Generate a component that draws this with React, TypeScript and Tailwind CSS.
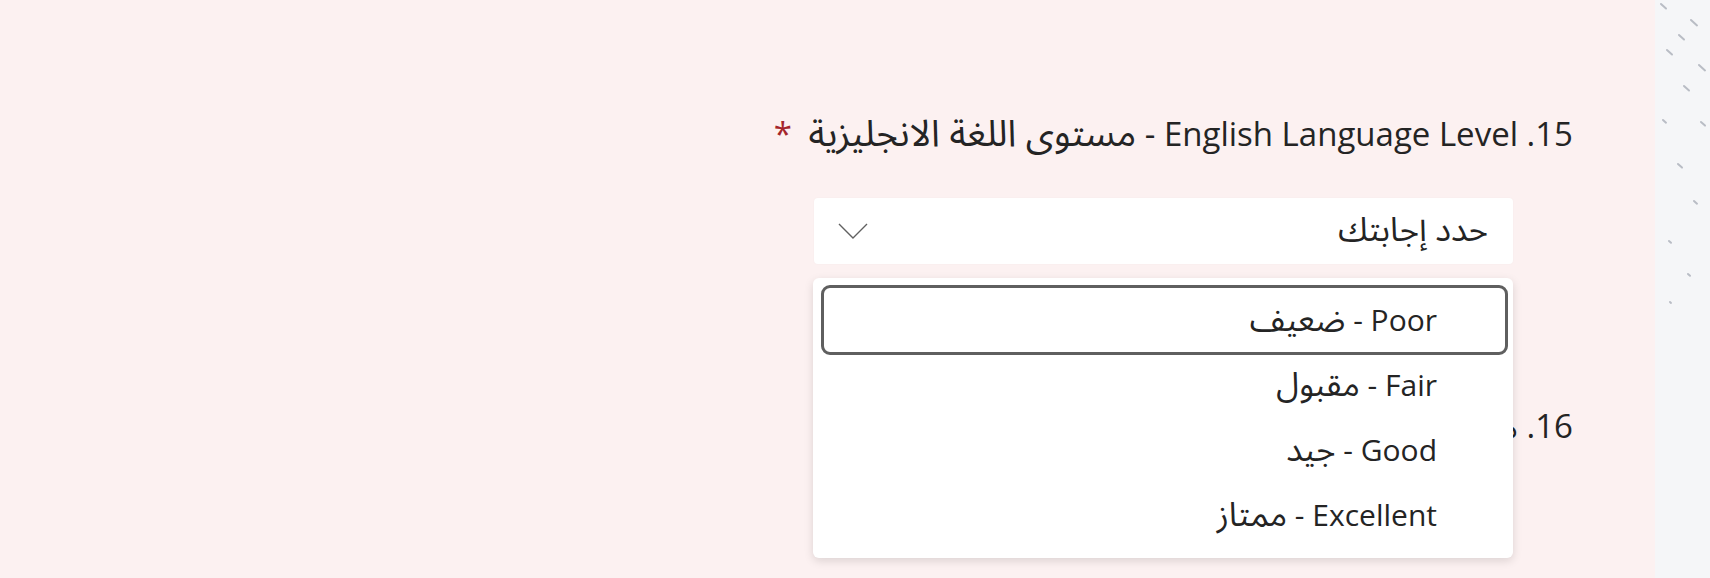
import * as React from "react"

const OPTIONS = [
  ["Poor", "ضعيف"],
  ["Fair", "مقبول"],
  ["Good", "جيد"],
  ["Excellent", "ممتاز"],
]

// little grey dashes on the right edge strip
const DASHES: [number, number, number][] = [
  [6, 4, 5], [36, 20, 6], [24, 35, 5], [12, 50, 5], [44, 65, 6],
  [29, 86, 5], [8, 120, 3], [46, 122, 4], [23, 164, 4], [39, 201, 3],
  [14, 241, 2], [33, 274, 2], [15, 302, 1],
]

const ar = '"Noto Sans Arabic", "DejaVu Sans", sans-serif'

function Chevron() {
  return (
    <svg width="30" height="17" viewBox="0 0 30 17" fill="none">
      <polyline points="1,1 15,15 29,1" stroke="#616161" strokeWidth="1.4" />
    </svg>
  )
}

export default function App() {
  return (
    <div
      className="flex h-[578px] w-full overflow-hidden bg-[#fcf1f1] text-[#242424]"
      style={{ fontFamily: '"Open Sans", "DejaVu Sans", sans-serif' }}
    >
      <main className="relative flex-1" dir="rtl">
        <div className="pr-[82px] pt-[112px]">
          <h2 className="text-[33px] leading-[44px]">
            15. English Language Level -{" "}
            <span className="text-[37px]" style={{ fontFamily: ar }}>مستوى اللغة الانجليزية</span>{" "}
            <span className="mr-[8px] text-[#a4262c]">*</span>
          </h2>
          <div className="mt-[42px] mr-[60px] flex h-[66px] w-[699px] items-center justify-between rounded-[4px] bg-white pr-[25px] pl-[24px] shadow-[0_0_2px_rgba(0,0,0,0.04)]">
            <span className="text-[33px] leading-[40px]" style={{ fontFamily: ar }}>
              حدد إجابتك
            </span>
            <Chevron />
          </div>
          <h2 className="mt-[140px] text-[33px] leading-[44px]">
            16. <span style={{ fontFamily: ar }}>ما</span>
          </h2>
        </div>

        {/* open listbox */}
        <div className="absolute left-[813px] top-[278px] w-[700px] rounded-[6px] bg-white pt-[10px] pb-[10px] pr-[5px] pl-[8px] shadow-[0_3px_10px_rgba(0,0,0,0.13)]">
          {OPTIONS.map(([en, arText], i) => (
            <div key={en} className="relative flex h-[65px] items-center pr-[71px]">
              {i === 0 && (
                <span className="absolute -top-[3px] -bottom-[2px] left-0 right-0 rounded-[9px] border-[3px] border-[#5f5f5f]" />
              )}
              <span className="text-[30px] leading-[40px]">
                {en} - <span className="text-[33px]" style={{ fontFamily: ar }}>{arText}</span>
              </span>
            </div>
          ))}
        </div>
      </main>

      <aside className="relative w-[55px] bg-[#f5f6f8]">
        <svg width="55" height="578" className="absolute inset-0">
          {DASHES.map(([x, y, l], i) => (
            <line
              key={i}
              x1={x}
              y1={y}
              x2={x + l}
              y2={y + l * 0.9}
              stroke="#b9bdc5"
              strokeWidth="2"
              strokeLinecap="round"
            />
          ))}
        </svg>
      </aside>
    </div>
  )
}
